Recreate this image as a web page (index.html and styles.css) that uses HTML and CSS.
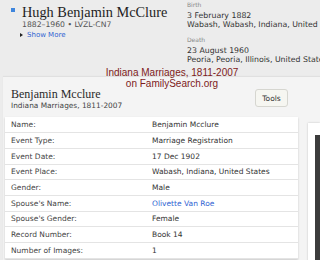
FILE: index.html
```html
<!DOCTYPE html>
<html lang="en">
<head>
<meta charset="UTF-8">
<title>Benjamin Mcclure - Indiana Marriages</title>
<link rel="stylesheet" href="styles.css">
</head>
<body>

<header class="person">
    <div class="person-main">
        <span class="marker"></span>
        <div>
            <h1 class="person-name">Hugh Benjamin McClure</h1>
            <p class="person-meta">1882–1960 • LVZL-CN7</p>
            <a class="show-more" href="#"><span class="arrow"></span>Show More</a>
        </div>
    </div>
    <div class="person-events">
        <div class="event">
            <p class="event-label">Birth</p>
            <p>3 February 1882</p>
            <p>Wabash, Wabash, Indiana, United States</p>
        </div>
        <div class="event">
            <p class="event-label">Death</p>
            <p>23 August 1960</p>
            <p>Peoria, Peoria, Illinois, United States</p>
        </div>
    </div>
</header>

<div class="caption">Indiana Marriages, 1811-2007<br>on FamilySearch.org</div>

<div class="record">
    <div class="record-head">
        <div>
            <h2 class="record-name">Benjamin Mcclure</h2>
            <p class="record-collection">Indiana Marriages, 1811-2007</p>
        </div>
        <button class="tools-btn">Tools</button>
    </div>
    <div class="record-body">
        <table class="facts">
            <tr><td>Name:</td><td>Benjamin Mcclure</td></tr>
            <tr><td>Event Type:</td><td>Marriage Registration</td></tr>
            <tr><td>Event Date:</td><td>17 Dec 1902</td></tr>
            <tr><td>Event Place:</td><td>Wabash, Indiana, United States</td></tr>
            <tr><td>Gender:</td><td>Male</td></tr>
            <tr><td>Spouse's Name:</td><td><a href="#">Olivette Van Roe</a></td></tr>
            <tr><td>Spouse's Gender:</td><td>Female</td></tr>
            <tr><td>Record Number:</td><td>Book 14</td></tr>
            <tr><td>Number of Images:</td><td>1</td></tr>
        </table>
        <div class="viewer">
            <div class="viewer-screen"></div>
        </div>
    </div>
</div>

</body>
</html>
```

FILE: styles.css
```css
/* Global styles */
body {
    font-family: "DejaVu Sans", Verdana, sans-serif;
    margin: 0;
    padding: 0;
    background-color: #ececec;
    color: #333;
    width: 320px;
    height: 260px;
    overflow: hidden;
    position: relative;
}
p {
    margin: 0;
}
a {
    color: #2f63d2;
    text-decoration: none;
}

/* Person summary */
.person {
    display: flex;
    height: 77px;
    white-space: nowrap;
}
.person-main {
    display: flex;
    flex-shrink: 0;
    width: 187px;
    box-sizing: border-box;
    padding-left: 11px;
}
.marker {
    flex-shrink: 0;
    width: 4px;
    height: 4px;
    margin: 8px 7px 0 0;
    background-color: #3f86dd;
}
.person-name {
    font-family: "Liberation Serif", Georgia, serif;
    font-weight: normal;
    font-size: 14.3px;
    color: #1e1e1e;
    margin: 5px 0 0;
    line-height: 14px;
}
.person-meta {
    font-size: 7.7px;
    color: #555;
    margin: 1px 0 0 0;
    line-height: 9px;
}
.show-more {
    display: flex;
    align-items: center;
    font-size: 7px;
    margin: 1px 0 0 -2px;
    line-height: 10px;
}
.arrow {
    width: 0;
    height: 0;
    border-top: 2px solid transparent;
    border-bottom: 2px solid transparent;
    border-left: 3px solid #222;
    margin-right: 4px;
}
.person-events {
    flex: 1;
    overflow: hidden;
    padding-top: 1px;
    font-size: 7.8px;
    color: #333;
}
.event {
    line-height: 9px;
    margin-bottom: 7px;
}
.event-label {
    font-size: 6px;
    line-height: 8px;
    color: #8a8a8a;
    margin-bottom: 2px;
}

/* Red caption */
.caption {
    position: absolute;
    left: 92px;
    top: 68px;
    width: 160px;
    text-align: center;
    font-family: "Liberation Sans", Arial, sans-serif;
    font-size: 10px;
    line-height: 10.5px;
    color: #7e1b1b;
}

/* Record panel */
.record {
    margin-left: 3px;
    background-color: #f4f4f4;
    box-shadow: 0 -1px 1px rgba(0, 0, 0, 0.05);
    height: 183px;
}
.record-head {
    display: flex;
    justify-content: space-between;
    align-items: flex-start;
    padding: 10px 32px 0 8px;
    height: 30px;
}
.record-name {
    font-family: "Liberation Serif", Georgia, serif;
    font-weight: normal;
    font-size: 12px;
    color: #2a2a2a;
    margin: 0;
    line-height: 14px;
}
.record-collection {
    font-size: 7.4px;
    color: #444;
    line-height: 10px;
}
.tools-btn {
    font-family: "DejaVu Sans", Verdana, sans-serif;
    font-size: 7.5px;
    color: #333;
    background-color: #f6f6f1;
    border: 1px solid #d6d6d0;
    border-radius: 3px;
    width: 33px;
    height: 18px;
    padding: 0;
    margin-top: 2px;
}
.record-body {
    display: flex;
    align-items: flex-start;
    gap: 10px;
}
.facts {
    flex-shrink: 0;
    width: 293px;
    margin-left: 2px;
    border-collapse: collapse;
    background-color: #fff;
    box-shadow: 0 1px 2px rgba(0, 0, 0, 0.18);
    font-size: 7.5px;
}
.facts td {
    box-sizing: border-box;
    height: 15.7px;
    padding: 0 0 0 6px;
    border-bottom: 1px solid #e4e4e4;
    color: #444;
    line-height: 9px;
}
.facts td:first-child {
    width: 141px;
}
.facts td:last-child {
    color: #333;
}
.viewer {
    flex: 1;
    background-color: #fff;
    margin-top: 6px;
    padding: 12px 0 0 7px;
    box-shadow: 0 0 2px rgba(0, 0, 0, 0.2);
}
.viewer-screen {
    background-color: #3c3c3c;
    height: 140px;
}
```
